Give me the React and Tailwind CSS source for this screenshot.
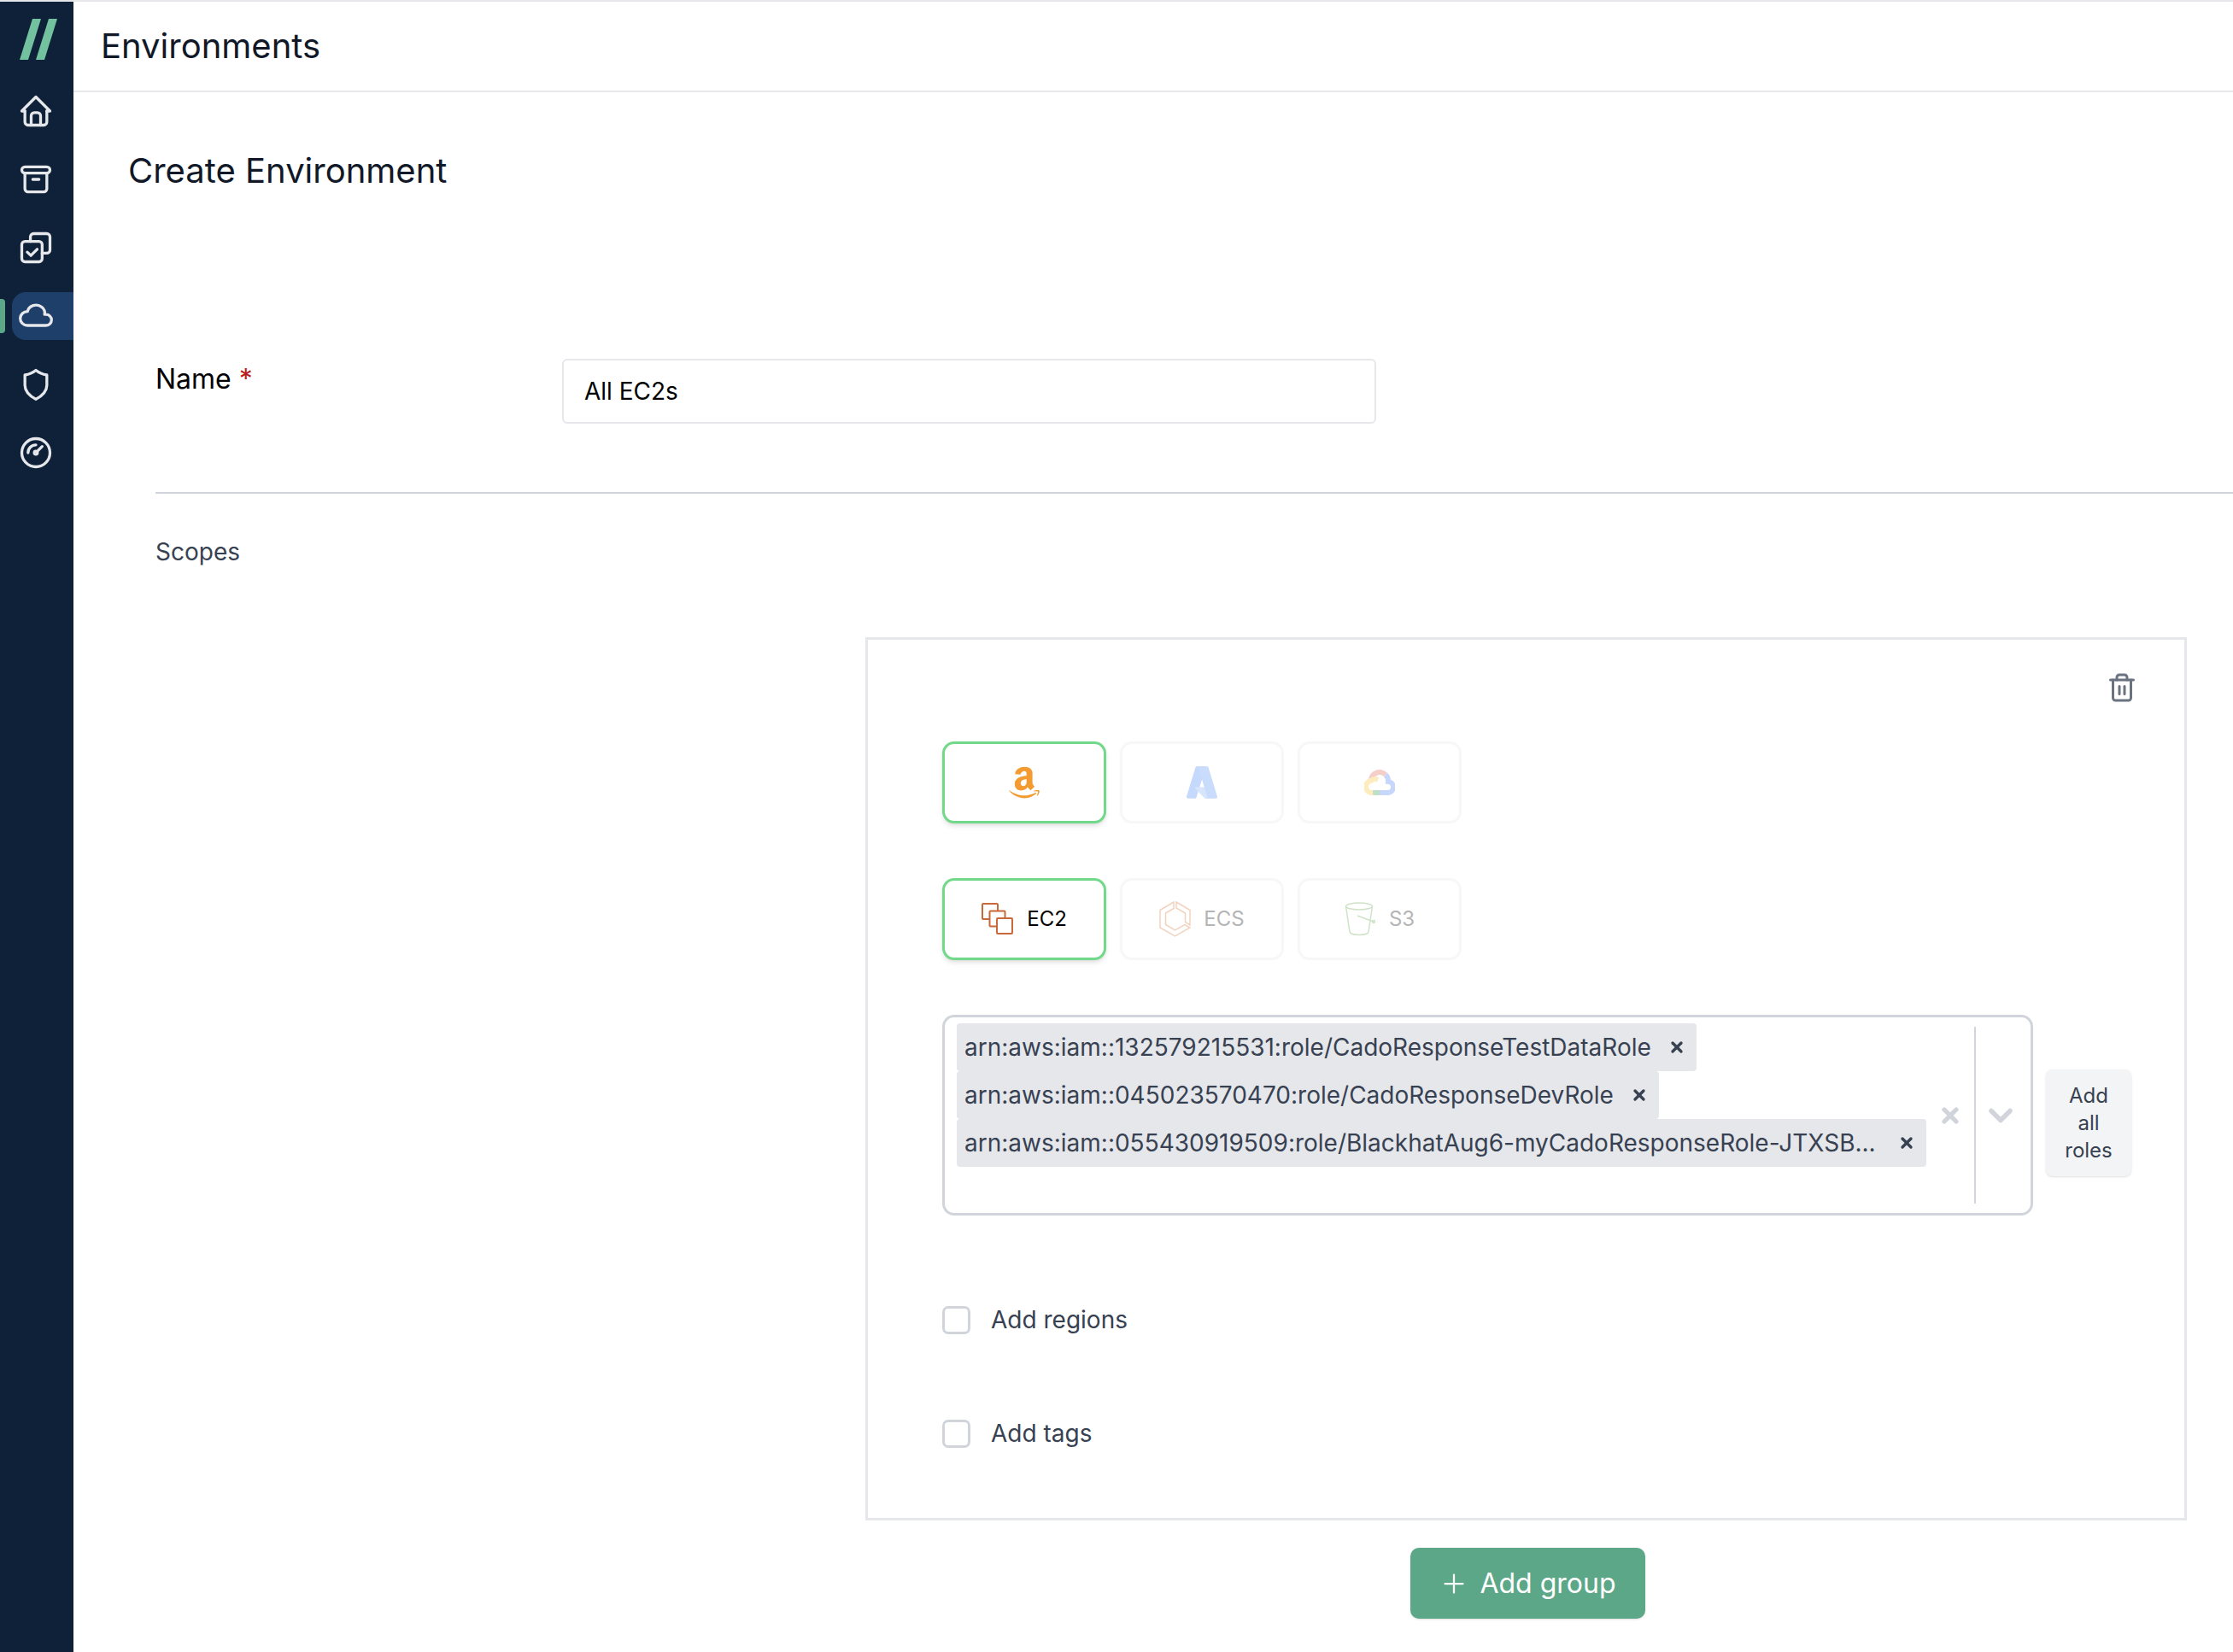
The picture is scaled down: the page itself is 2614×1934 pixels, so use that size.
import React from 'react';
import { TbHome, TbArchive, TbCloud, TbGauge } from 'react-icons/tb';
import { FaAmazon } from 'react-icons/fa';
import { Trash2, Plus, X, ChevronDown } from 'lucide-react';

const CopyCheckIcon = ({ size, color }) => (
  <svg width={size} height={size} viewBox="0 0 24 24" fill="none" stroke={color} strokeWidth="1.8" strokeLinecap="round" strokeLinejoin="round">
    <path d="M8.5 8 V5 a2 2 0 0 1 2-2 h8.5 a2 2 0 0 1 2 2 v8.5 a2 2 0 0 1 -2 2 h-3" />
    <rect x="3" y="8" width="13" height="13" rx="2" />
    <path d="M6.5 14.8 l2.3 2.2 l4-4" />
  </svg>
);

const ShieldIcon = ({ size, color }) => (
  <svg width={size} height={size} viewBox="0 0 24 24" fill="none" stroke={color} strokeWidth="1.8" strokeLinecap="round" strokeLinejoin="round">
    <path d="M12 3 C14 4.6 16.5 5.6 19 6 V12.5 C19 16 16.5 19 12 21.5 C7.5 19 5 16 5 12.5 V6 C7.5 5.6 10 4.6 12 3 Z" />
  </svg>
);

const navItems = [
  { icon: TbHome },
  { icon: TbArchive },
  { icon: CopyCheckIcon },
  { icon: TbCloud, active: true },
  { icon: ShieldIcon },
  { icon: TbGauge },
];

const roles = [
  { arn: 'arn:aws:iam::132579215531:role/CadoResponseTestDataRole' },
  { arn: 'arn:aws:iam::045023570470:role/CadoResponseDevRole' },
  { arn: 'arn:aws:iam::055430919509:role/BlackhatAug6-myCadoResponseRole-JTXSB...', wide: true },
];

const AzureIcon = () => (
  <svg width="36" height="38" viewBox="4 6 88 84" preserveAspectRatio="none">
    <path fill="#c4d9fb" d="M33.34 6.54h26.04l-27.03 80.1a4.15 4.15 0 0 1-3.94 2.81H8.15a4.14 4.14 0 0 1-3.93-5.47L29.4 9.38a4.15 4.15 0 0 1 3.94-2.83z" />
    <path fill="#d6e4fc" d="M71.17 60.26H29.88a1.91 1.91 0 0 0-1.3 3.31l26.53 24.76a4.17 4.17 0 0 0 2.85 1.12h23.38z" />
    <path fill="#c9dcfb" d="M66.6 9.36a4.14 4.14 0 0 0-3.93-2.82H33.65a4.15 4.15 0 0 1 3.93 2.82l25.18 74.62a4.15 4.15 0 0 1-3.93 5.48h29.02a4.15 4.15 0 0 0 3.93-5.48z" />
  </svg>
);

const Ec2Icon = () => (
  <svg width="38" height="38" viewBox="0 0 38 38" fill="none" stroke="#c8693a" strokeWidth="2">
    <rect x="1" y="1" width="18" height="18" rx="1" fill="#fff" />
    <rect x="9.5" y="9.5" width="18" height="18" rx="1" fill="#fff" />
    <rect x="18" y="18" width="18" height="18" rx="1" fill="#fff" />
  </svg>
);

const EcsIcon = () => (
  <svg width="37" height="42" viewBox="0 0 37 42" fill="none" stroke="#f2d3c0" strokeWidth="1.5">
    <path d="M17 1 L1 10.5 V31 L18.5 41 L36 31 L30 27.5 L18.5 34 L7.5 27.5 V14 L17 8.5 Z" />
    <path d="M20 1 L36 10.5 V28 L30.5 24.5 V14 L20 8 Z" />
  </svg>
);

const S3Icon = () => (
  <svg width="37" height="40" viewBox="0 0 37 40" fill="none" stroke="#cfe3c9" strokeWidth="1.5">
    <ellipse cx="17" cy="5" rx="15.5" ry="4" />
    <path d="M1.5 5 L6 35 C7 39.5 27 39.5 28 35 L32.5 5" />
    <path d="M15 16 L34 23" />
    <circle cx="34" cy="23" r="1.5" />
  </svg>
);

const GoogleCloudIcon = () => (
  <svg width="36" height="30" viewBox="0 0 36 30" fill="none" strokeWidth="6">
    <path d="M8 12 A10 10 0 0 1 25 6" stroke="#f4cfc9" />
    <path d="M25 6 A10 10 0 0 1 28 14 A6.5 6.5 0 0 1 27 27 H18" stroke="#c6d7fb" />
    <path d="M18 27 H10" stroke="#bfdfc6" />
    <path d="M10 27 A7 7 0 0 1 8 13 A7 7 0 0 1 16 12" stroke="#fdecbd" />
  </svg>
);

const TileButton = ({ active, children }) => (
  <button
    className={`flex h-[96px] w-[192px] items-center justify-center gap-[15px] rounded-[14px] border-[3px] bg-white ${
      active ? 'border-[#72d88a] shadow-md' : 'border-[#f7f7f8]'
    }`}
  >
    {children}
  </button>
);

const CheckRow = ({ label }) => (
  <label className="flex items-center gap-[24px] text-[28px] leading-[34px] text-[#374151]">
    <span className="h-[33px] w-[33px] rounded-[7px] border-[3px] border-[#d1d5db] bg-white" />
    {label}
  </label>
);

const App = () => {
  return (
    <div
      className="flex h-[1934px] flex-col overflow-hidden border-t-2 border-[#e5e7eb] bg-white"
      style={{ fontFamily: 'Inter, "Noto Sans", sans-serif' }}
    >
      <div className="flex min-h-0 flex-1">
        <aside className="flex w-[86px] shrink-0 flex-col items-center bg-[#0f2139]">
          <svg width="44" height="48" viewBox="0 0 44 48" className="ml-[4px] mt-[20px] mb-[32px] shrink-0" fill="#72c29f">
            <path d="M15 0 H25 L10 48 H0 Z" />
            <path d="M34 0 H44 L29 48 H19 Z" />
          </svg>
          <nav className="flex w-full flex-col gap-[24px]">
            {navItems.map((item, i) => {
              const Icon = item.icon;
              return (
                <div key={i} className="relative h-[56px] w-full">
                  {item.active && (
                    <span className="absolute left-0 top-[8px] h-[40px] w-[6px] rounded-r-[4px] bg-[#5ca787]" />
                  )}
                  <div
                    className={`ml-[14px] flex h-full items-center rounded-l-[16px] pl-[6px] ${
                      item.active ? 'bg-[#1f3f6b]' : ''
                    }`}
                  >
                    <Icon size={44} strokeWidth={1.8} color="#e5e7eb" />
                  </div>
                </div>
              );
            })}
          </nav>
        </aside>

        <main className="min-w-0 flex-1">
          <header className="flex h-[106px] items-center border-b-2 border-[#e5e7eb] pl-[32px]">
            <h1 className="text-[40px] font-normal leading-none text-[#111827]">Environments</h1>
          </header>

          <div className="pl-[64px] pt-[64px]">
            <h2 className="text-[40px] font-normal leading-[56px] text-[#111827]">Create Environment</h2>
          </div>

          <section className="mt-[192px] pl-[96px]">
            <div className="flex items-start">
              <label className="w-[476px] pt-[5px] text-[32px] leading-[38px] text-black">
                Name <span className="text-[#b91c1c]">*</span>
              </label>
              <div className="flex h-[76px] w-[953px] items-center rounded-[6px] border-2 border-[#e5e7eb] bg-white px-[24px] text-[28px] text-black">
                All EC2s
              </div>
            </div>

            <hr className="mt-[80px] border-t-2 border-[#d1d5db]" />

            <p className="mt-[51px] text-[28px] leading-[34px] text-[#374151]">Scopes</p>
          </section>

          <section className="ml-[927px] mt-[83px] w-[1547px]">
            <div className="h-[1034px] border-[3px] border-[#e5e7eb] bg-white pl-[87px] pr-[55px] pt-[38px]">
              <div className="flex justify-end">
                <Trash2 size={36} strokeWidth={2} color="#6b7280" />
              </div>

              <div className="mt-[45px] flex gap-[16px]">
                <TileButton active>
                  <FaAmazon size={42} color="#f39b30" />
                </TileButton>
                <TileButton>
                  <AzureIcon />
                </TileButton>
                <TileButton>
                  <GoogleCloudIcon />
                </TileButton>
              </div>

              <div className="mt-[64px] flex gap-[16px] text-[24px]">
                <TileButton active>
                  <Ec2Icon />
                  <span className="text-black">EC2</span>
                </TileButton>
                <TileButton>
                  <EcsIcon />
                  <span className="text-[#b5b5b5]">ECS</span>
                </TileButton>
                <TileButton>
                  <S3Icon />
                  <span className="text-[#b5b5b5]">S3</span>
                </TileButton>
              </div>

              <div className="mt-[64px] flex items-start gap-[15px]">
                <div className="flex h-[235px] w-[1277px] rounded-[14px] border-[3px] border-[#d1d5db] bg-white">
                  <div className="flex min-w-0 flex-1 flex-col items-start pl-[14px] pt-[7px]">
                    {roles.map((role) => (
                      <div
                        key={role.arn}
                        className={`flex h-[56px] items-center rounded-[4px] bg-[#e5e7eb] pl-[9px] text-[28px] text-[#374151] ${
                          role.wide ? 'w-[1135px]' : ''
                        }`}
                      >
                        <span className="whitespace-nowrap">{role.arn}</span>
                        <span className="ml-auto flex w-[53px] justify-center pl-[7px]">
                          <X size={20} strokeWidth={4} color="#374151" />
                        </span>
                      </div>
                    ))}
                  </div>
                  <div className="flex items-center pr-[14px]">
                    <X size={28} strokeWidth={4.5} color="#d1d5db" />
                  </div>
                  <div className="my-[11px] w-[2px] bg-[#d1d5db]" />
                  <div className="flex w-[64px] items-center justify-center pr-[6px]">
                    <ChevronDown size={44} strokeWidth={3} color="#d1d5db" />
                  </div>
                </div>

                <button className="mt-[64px] flex h-[125px] w-[100px] items-center justify-center rounded-[8px] bg-[#f3f4f6] text-center text-[24px] leading-[32px] text-[#374151] shadow-sm">
                  Add
                  <br />
                  all
                  <br />
                  roles
                </button>
              </div>

              <div className="mt-[105px] flex flex-col gap-[99px]">
                <CheckRow label="Add regions" />
                <CheckRow label="Add tags" />
              </div>
            </div>

            <div className="mt-[32px] flex justify-center pl-[3px]">
              <button className="flex h-[83px] w-[275px] items-center justify-center gap-[12px] rounded-[10px] bg-[#5ca787] text-[32px] text-white shadow-sm">
                <Plus size={36} strokeWidth={1.5} />
                Add group
              </button>
            </div>
          </section>
        </main>
      </div>
    </div>
  );
};

export default App;
